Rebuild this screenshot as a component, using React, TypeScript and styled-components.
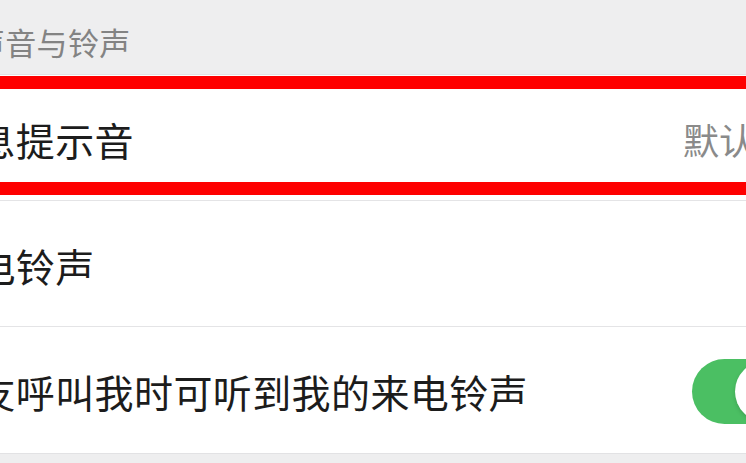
import React, { useState } from 'react';
import styled, { createGlobalStyle } from 'styled-components';

const GlobalStyle = createGlobalStyle`
  html, body {
    margin: 0;
    padding: 0;
    background: #eeeeef;
    overflow: hidden;
    font-family: "Noto Sans CJK SC", "Noto Sans", sans-serif;
  }
`;

const Page = styled.div`
  width: 922px;
  margin-left: -94px;
  height: 463px;
  background: #eeeeef;
`;

const SectionTitle = styled.div`
  height: 75px;
  display: flex;
  align-items: center;
  padding: 8px 0 0 68px;
  font-size: 31px;
  letter-spacing: 0.3px;
  color: #838383;
  border-bottom: 1px solid #e2e2e4;
  box-sizing: border-box;
`;

const Group = styled.div`
  background: #ffffff;
  border-bottom: 1px solid #e2e2e4;
`;

const Cell = styled.div<{ $last?: boolean }>`
  position: relative;
  height: 126px;
  box-sizing: border-box;
  display: flex;
  align-items: center;
  padding: 2px 30px 0 31px;
  border-bottom: ${(p) => (p.$last ? 'none' : '1px solid #e4e4e6')};
`;

const Label = styled.span`
  flex: 1;
  font-size: 39px;
  letter-spacing: 0.4px;
  color: #1c1c1c;
  white-space: nowrap;
`;

const Value = styled.div`
  display: flex;
  align-items: center;
  gap: 16px;
  font-size: 36px;
  color: #8a8a8a;
`;

const Highlight = styled.div`
  position: absolute;
  top: 1px;
  bottom: 5px;
  left: 40px;
  right: -20px;
  border: 13px solid #fe0000;
  pointer-events: none;
`;

const Switch = styled.button<{ $on: boolean }>`
  position: relative;
  width: 106px;
  height: 65px;
  border: none;
  padding: 0;
  border-radius: 33px;
  background: ${(p) => (p.$on ? '#4bbf63' : '#e5e5e5')};
  cursor: pointer;

  &::after {
    content: '';
    position: absolute;
    top: 2px;
    left: ${(p) => (p.$on ? '43px' : '2px')};
    width: 61px;
    height: 61px;
    border-radius: 50%;
    background: #ffffff;
    box-shadow: 0 2px 4px rgba(0, 0, 0, 0.15);
  }
`;

const Chevron = () => (
  <svg width="27" height="40" viewBox="0 0 27 40">
    <path d="M8 6 L21 20 L8 34" fill="none" stroke="#c7c7cc" strokeWidth="4" />
  </svg>
);

const App: React.FC = () => {
  const [ringOn, setRingOn] = useState(true);

  return (
    <Page>
      <GlobalStyle />
      <SectionTitle>声音与铃声</SectionTitle>
      <Group>
        <Cell>
          <Label>消息提示音</Label>
          <Value>
            默认
            <Chevron />
          </Value>
          <Highlight />
        </Cell>
        <Cell>
          <Label>来电铃声</Label>
          <Value>
            <Chevron />
          </Value>
        </Cell>
        <Cell $last>
          <Label>朋友呼叫我时可听到我的来电铃声</Label>
          <Switch $on={ringOn} onClick={() => setRingOn(!ringOn)} />
        </Cell>
      </Group>
    </Page>
  );
};

export default App;
